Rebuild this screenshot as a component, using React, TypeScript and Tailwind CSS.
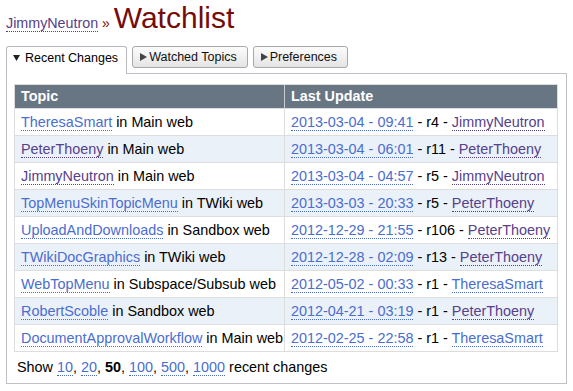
import React from "react";

type Row = {
  topic: string;
  topicVisited?: boolean;
  web: string;
  date: string;
  rev: string;
  user: string;
  userVisited: boolean;
};

const rows: Row[] = [
  { topic: "TheresaSmart", web: "Main", date: "2013-03-04 - 09:41", rev: "r4", user: "JimmyNeutron", userVisited: true },
  { topic: "PeterThoeny", topicVisited: true, web: "Main", date: "2013-03-04 - 06:01", rev: "r11", user: "PeterThoeny", userVisited: true },
  { topic: "JimmyNeutron", topicVisited: true, web: "Main", date: "2013-03-04 - 04:57", rev: "r5", user: "JimmyNeutron", userVisited: true },
  { topic: "TopMenuSkinTopicMenu", web: "TWiki", date: "2013-03-03 - 20:33", rev: "r5", user: "PeterThoeny", userVisited: true },
  { topic: "UploadAndDownloads", web: "Sandbox", date: "2012-12-29 - 21:55", rev: "r106", user: "PeterThoeny", userVisited: true },
  { topic: "TWikiDocGraphics", web: "TWiki", date: "2012-12-28 - 02:09", rev: "r13", user: "PeterThoeny", userVisited: true },
  { topic: "WebTopMenu", web: "Subspace/Subsub", date: "2012-05-02 - 00:33", rev: "r1", user: "TheresaSmart", userVisited: false },
  { topic: "RobertScoble", web: "Sandbox", date: "2012-04-21 - 03:19", rev: "r1", user: "PeterThoeny", userVisited: true },
  { topic: "DocumentApprovalWorkflow", web: "Main", date: "2012-02-25 - 22:58", rev: "r1", user: "TheresaSmart", userVisited: false },
];

function Link({ children, visited }: { children: React.ReactNode; visited?: boolean }) {
  return visited ? (
    <span className="text-[#56408c] border-b border-dotted border-[#56408c]">{children}</span>
  ) : (
    <span className="text-[#4a6dd0] border-b border-dotted border-[#4a6dd0]">{children}</span>
  );
}

function TriDown() {
  return (
    <svg width="7" height="6" viewBox="0 0 7 6" className="mr-[5px]">
      <polygon points="0,0 7,0 3.5,6" fill="#222" />
    </svg>
  );
}

function TriRight() {
  return (
    <svg width="7" height="8" viewBox="0 0 7 8" className="mr-[2px]">
      <polygon points="0,0 7,4 0,8" fill="#444" />
    </svg>
  );
}

export default function App() {
  return (
    <div className="w-[573px] h-[391px] bg-white pl-[6px] pt-[3px] font-['Liberation_Sans',Arial,sans-serif] text-black">
      <div className="h-[31px] leading-[30px] whitespace-nowrap">
        <span className="text-[14.3px]">
          <Link visited>JimmyNeutron</Link>
        </span>
        <span className="text-[14px] text-[#750b0b]"> » </span>
        <span className="text-[30px] text-[#750b0b]">Watchlist</span>
      </div>

      <div className="mt-[12px] flex items-start text-[12.5px]">
        <div className="relative z-10 -mb-[1px] h-[28px] bg-white border border-b-0 border-[#b8b8c0] rounded-t-[3px] pl-[6px] pr-[8px] pt-[2px] leading-[18px] flex items-start">
          <div className="flex items-center h-[18px]">
            <TriDown />
            <span>Recent Changes</span>
          </div>
        </div>
        <div className="ml-[5px] h-[22px] border border-[#a8a8a8] rounded-[3px] bg-gradient-to-b from-[#fcfcfc] to-[#e4e4e4] pl-[7px] pr-[10px] leading-[20px] flex items-center">
          <TriRight />
          <span className="text-[#111]">Watched Topics</span>
        </div>
        <div className="ml-[5px] h-[22px] border border-[#a8a8a8] rounded-[3px] bg-gradient-to-b from-[#fcfcfc] to-[#e4e4e4] pl-[7px] pr-[10px] leading-[20px] flex items-center">
          <TriRight />
          <span className="text-[#111]">Preferences</span>
        </div>
      </div>

      <div className="w-[561px] border border-[#c0c0c8] pt-[10px] pl-[7px] pr-[8px] pb-[6px] text-[14.4px]">
        <div className="w-[544px] border border-[#dddddd]">
          <div className="grid grid-cols-[270px_272px] h-[23px] bg-[#687684] text-white font-bold leading-[23px]">
            <div className="pl-[6px] border-r border-[#c8ccd2]">Topic</div>
            <div className="pl-[6px]">Last Update</div>
          </div>
          {rows.map((r, i) => (
            <div
              key={i}
              className={`grid grid-cols-[270px_272px] h-[27px] border-t border-[#dddddd] leading-[26px] whitespace-nowrap ${
                i % 2 === 1 ? "bg-[#ebf1f8]" : "bg-white"
              }`}
            >
              <div className="pl-[6px] border-r border-[#dddddd]">
                <Link visited={r.topicVisited}>{r.topic}</Link> in {r.web} web
              </div>
              <div className="pl-[6px]">
                <Link>{r.date}</Link> - {r.rev} - <Link visited={r.userVisited}>{r.user}</Link>
              </div>
            </div>
          ))}
        </div>
        <div className="mt-[5px] ml-[3px] leading-[20px] whitespace-nowrap">
          Show <Link>10</Link>, <Link>20</Link>, <b>50</b>, <Link>100</Link>, <Link>500</Link>, <Link>1000</Link> recent changes
        </div>
      </div>
    </div>
  );
}
